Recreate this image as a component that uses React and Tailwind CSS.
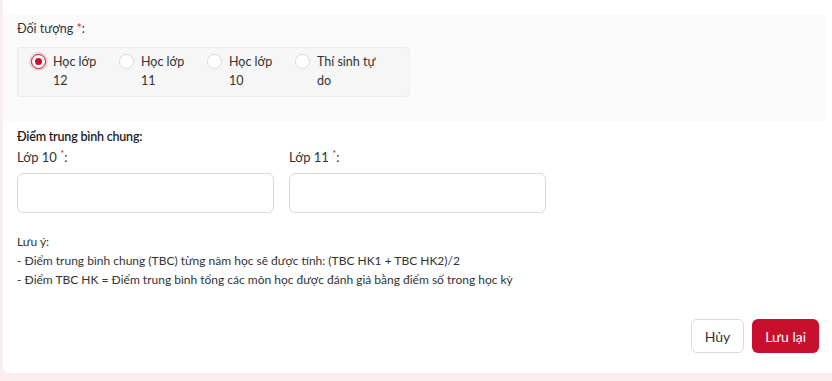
import React, { useState } from "react";

const options = [
  { id: "12", line1: "Học lớp", line2: "12" },
  { id: "11", line1: "Học lớp", line2: "11" },
  { id: "10", line1: "Học lớp", line2: "10" },
  { id: "free", line1: "Thí sinh tự", line2: "do" },
];

function Radio({ checked }) {
  return checked ? (
    <span className="mt-[2px] flex h-[15px] w-[15px] shrink-0 items-center justify-center rounded-full border border-[#c8102e] bg-white shadow-[0_0_0_2px_rgba(200,16,46,0.15)]">
      <span className="h-[7px] w-[7px] rounded-full bg-[#c8102e]" />
    </span>
  ) : (
    <span className="mt-[2px] h-[15px] w-[15px] shrink-0 rounded-full border border-[#dcdcdc] bg-white" />
  );
}

export default function App() {
  const [target, setTarget] = useState("12");

  return (
    <div
      className="h-[381px] w-[832px] overflow-hidden bg-[#f8eef0] pb-[8px] pl-[3px] text-[12.5px] leading-[19px] text-[#333]"
      style={{ fontFamily: "Lato, 'Open Sans', sans-serif" }}
    >
      <div className="flex h-full flex-col rounded-bl-[6px] bg-white pt-[15px]">
        {/* Đối tượng */}
        <div className="mr-[6px] bg-[#fafafa] px-[14px] pb-[24px] pt-[4px]">
          <div className="mb-[9px]">
            Đối tượng <span className="text-[#e0283e]">*</span>:
          </div>
          <div className="flex w-[393px] rounded-[4px] border border-[#ececec] bg-[#f6f6f6] py-[4px] pb-[6px] pl-[13px]">
            {options.map((o) => (
              <label
                key={o.id}
                onClick={() => setTarget(o.id)}
                className="flex w-[88px] cursor-pointer gap-[7px]"
              >
                <Radio checked={target === o.id} />
                <span className="flex flex-col">
                  <span>{o.line1}</span>
                  <span>{o.line2}</span>
                </span>
              </label>
            ))}
          </div>
        </div>

        {/* Điểm trung bình chung */}
        <div className="px-[14px] pt-[6px] text-[12px]">
          <div className="text-[12.5px] font-semibold tracking-[-0.2px] text-[#222]">Điểm trung bình chung:</div>
          <div className="mt-[2px] flex gap-[15px] text-[13px]">
            <div className="w-[257px]">
              <div>
                Lớp 10 <sup className="text-[#e0283e]">*</sup>:
              </div>
              <input className="mt-[6px] h-[40px] w-full rounded-[6px] border border-[#d9d9d9] bg-white px-3 outline-none" />
            </div>
            <div className="w-[257px]">
              <div>
                Lớp 11 <sup className="text-[#e0283e]">*</sup>:
              </div>
              <input className="mt-[6px] h-[40px] w-full rounded-[6px] border border-[#d9d9d9] bg-white px-3 outline-none" />
            </div>
          </div>

          <div className="mt-[19px]">
            <div>Lưu ý:</div>
            <div>- Điểm trung bình chung (TBC) từng năm học sẽ được tính: (TBC HK1 + TBC HK2)/2</div>
            <div>- Điểm TBC HK = Điểm trung bình tổng các môn học được đánh giá bằng điểm số trong học kỳ</div>
          </div>
        </div>

        {/* Buttons */}
        <div className="mt-auto flex justify-end gap-[8px] pb-[20px] pr-[13px]">
          <button className="h-[34px] rounded-[6px] border border-[#dadada] bg-white px-[13px] text-[14px] text-[#333]">
            Hủy
          </button>
          <button className="h-[34px] rounded-[6px] bg-[#c8102e] px-[13px] text-[14px] text-white">
            Lưu lại
          </button>
        </div>
      </div>
    </div>
  );
}
